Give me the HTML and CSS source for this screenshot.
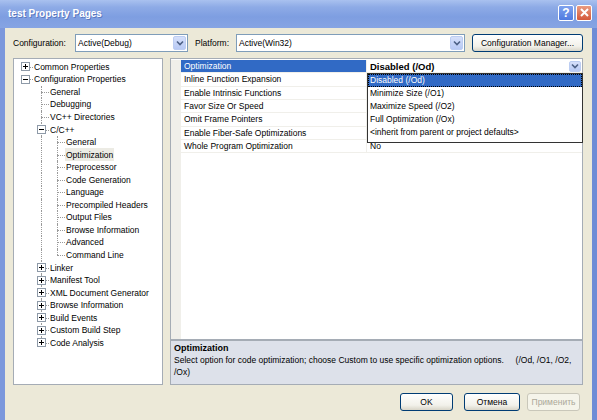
FILE: index.html
```html
<!DOCTYPE html>
<html>
<head>
<meta charset="utf-8">
<link rel="stylesheet" href="styles.css">
</head>
<body>
<div class="window">
  <div class="titlebar">
    <span class="title">test Property Pages</span>
    <div class="tbtns">
      <span class="tb help">?</span>
      <span class="tb close"><svg width="9" height="9" viewBox="0 0 9 9"><path d="M1 1L8 8M8 1L1 8" stroke="#fff" stroke-width="2"/></svg></span>
    </div>
  </div>
  <div class="frame">
    <div class="toprow">
      <span class="lab l1">Configuration:</span>
      <div class="combo c1"><span class="ctext">Active(Debug)</span><span class="ddb"><svg width="8" height="6" viewBox="0 0 8 6"><path d="M1 1.5L4 4.5L7 1.5" fill="none" stroke="#4d6185" stroke-width="1.6"/></svg></span></div>
      <span class="lab l2">Platform:</span>
      <div class="combo c2"><span class="ctext">Active(Win32)</span><span class="ddb"><svg width="8" height="6" viewBox="0 0 8 6"><path d="M1 1.5L4 4.5L7 1.5" fill="none" stroke="#4d6185" stroke-width="1.6"/></svg></span></div>
      <button class="btn cm">Configuration Manager...</button>
    </div>
    <div class="main">
      <div class="tree">
        <div class="tn"><span class="c h"><svg class="bx" width="9" height="9" viewBox="0 0 9 9"><rect x="0.5" y="0.5" width="8" height="8" fill="#fff" stroke="#8e9aa8"/><path d="M2 4.5h5M4.5 2v5" stroke="#000"/></svg></span><span class="lbl">Common Properties</span></div>
        <div class="tn"><span class="c h"><svg class="bx" width="9" height="9" viewBox="0 0 9 9"><rect x="0.5" y="0.5" width="8" height="8" fill="#fff" stroke="#8e9aa8"/><path d="M2 4.5h5" stroke="#000"/></svg></span><span class="lbl">Configuration Properties</span></div>
        <div class="tn"><span class="c"></span><span class="c t"></span><span class="lbl">General</span></div>
        <div class="tn"><span class="c"></span><span class="c t"></span><span class="lbl">Debugging</span></div>
        <div class="tn"><span class="c"></span><span class="c t"></span><span class="lbl">VC++ Directories</span></div>
        <div class="tn"><span class="c"></span><span class="c t"><svg class="bx" width="9" height="9" viewBox="0 0 9 9"><rect x="0.5" y="0.5" width="8" height="8" fill="#fff" stroke="#8e9aa8"/><path d="M2 4.5h5" stroke="#000"/></svg></span><span class="lbl">C/C++</span></div>
        <div class="tn"><span class="c"></span><span class="c v"></span><span class="c t"></span><span class="lbl">General</span></div>
        <div class="tn"><span class="c"></span><span class="c v"></span><span class="c t"></span><span class="lbl sel">Optimization</span></div>
        <div class="tn"><span class="c"></span><span class="c v"></span><span class="c t"></span><span class="lbl">Preprocessor</span></div>
        <div class="tn"><span class="c"></span><span class="c v"></span><span class="c t"></span><span class="lbl">Code Generation</span></div>
        <div class="tn"><span class="c"></span><span class="c v"></span><span class="c t"></span><span class="lbl">Language</span></div>
        <div class="tn"><span class="c"></span><span class="c v"></span><span class="c t"></span><span class="lbl">Precompiled Headers</span></div>
        <div class="tn"><span class="c"></span><span class="c v"></span><span class="c t"></span><span class="lbl">Output Files</span></div>
        <div class="tn"><span class="c"></span><span class="c v"></span><span class="c t"></span><span class="lbl">Browse Information</span></div>
        <div class="tn"><span class="c"></span><span class="c v"></span><span class="c t"></span><span class="lbl">Advanced</span></div>
        <div class="tn"><span class="c"></span><span class="c v"></span><span class="c e"></span><span class="lbl">Command Line</span></div>
        <div class="tn"><span class="c"></span><span class="c t"><svg class="bx" width="9" height="9" viewBox="0 0 9 9"><rect x="0.5" y="0.5" width="8" height="8" fill="#fff" stroke="#8e9aa8"/><path d="M2 4.5h5M4.5 2v5" stroke="#000"/></svg></span><span class="lbl">Linker</span></div>
        <div class="tn"><span class="c"></span><span class="c t"><svg class="bx" width="9" height="9" viewBox="0 0 9 9"><rect x="0.5" y="0.5" width="8" height="8" fill="#fff" stroke="#8e9aa8"/><path d="M2 4.5h5M4.5 2v5" stroke="#000"/></svg></span><span class="lbl">Manifest Tool</span></div>
        <div class="tn"><span class="c"></span><span class="c t"><svg class="bx" width="9" height="9" viewBox="0 0 9 9"><rect x="0.5" y="0.5" width="8" height="8" fill="#fff" stroke="#8e9aa8"/><path d="M2 4.5h5M4.5 2v5" stroke="#000"/></svg></span><span class="lbl">XML Document Generator</span></div>
        <div class="tn"><span class="c"></span><span class="c t"><svg class="bx" width="9" height="9" viewBox="0 0 9 9"><rect x="0.5" y="0.5" width="8" height="8" fill="#fff" stroke="#8e9aa8"/><path d="M2 4.5h5M4.5 2v5" stroke="#000"/></svg></span><span class="lbl">Browse Information</span></div>
        <div class="tn"><span class="c"></span><span class="c t"><svg class="bx" width="9" height="9" viewBox="0 0 9 9"><rect x="0.5" y="0.5" width="8" height="8" fill="#fff" stroke="#8e9aa8"/><path d="M2 4.5h5M4.5 2v5" stroke="#000"/></svg></span><span class="lbl">Build Events</span></div>
        <div class="tn"><span class="c"></span><span class="c t"><svg class="bx" width="9" height="9" viewBox="0 0 9 9"><rect x="0.5" y="0.5" width="8" height="8" fill="#fff" stroke="#8e9aa8"/><path d="M2 4.5h5M4.5 2v5" stroke="#000"/></svg></span><span class="lbl">Custom Build Step</span></div>
        <div class="tn"><span class="c"></span><span class="c e"><svg class="bx" width="9" height="9" viewBox="0 0 9 9"><rect x="0.5" y="0.5" width="8" height="8" fill="#fff" stroke="#8e9aa8"/><path d="M2 4.5h5M4.5 2v5" stroke="#000"/></svg></span><span class="lbl">Code Analysis</span></div>
      </div>
      <div class="right">
        <div class="grid">
          <div class="row"><span class="mg"></span><span class="nm hl">Optimization</span><span class="val"><b>Disabled (/Od)</b><span class="vdd"><svg width="8" height="6" viewBox="0 0 8 6"><path d="M1 1.5L4 4.5L7 1.5" fill="none" stroke="#4d6185" stroke-width="1.6"/></svg></span></span></div>
          <div class="row"><span class="mg"></span><span class="nm">Inline Function Expansion</span><span class="val"></span></div>
          <div class="row"><span class="mg"></span><span class="nm">Enable Intrinsic Functions</span><span class="val"></span></div>
          <div class="row"><span class="mg"></span><span class="nm">Favor Size Or Speed</span><span class="val"></span></div>
          <div class="row"><span class="mg"></span><span class="nm">Omit Frame Pointers</span><span class="val"></span></div>
          <div class="row"><span class="mg"></span><span class="nm">Enable Fiber-Safe Optimizations</span><span class="val"></span></div>
          <div class="row"><span class="mg"></span><span class="nm">Whole Program Optimization</span><span class="val">No</span></div>
          <div class="rest"><span class="mg"></span></div>
          <div class="dropdown">
            <div class="opt on">Disabled (/Od)</div>
            <div class="opt">Minimize Size (/O1)</div>
            <div class="opt">Maximize Speed (/O2)</div>
            <div class="opt">Full Optimization (/Ox)</div>
            <div class="opt">&lt;inherit from parent or project defaults&gt;</div>
          </div>
        </div>
        <div class="desc">
          <div class="dtitle">Optimization</div>
          <div class="dtext">Select option for code optimization; choose Custom to use specific optimization options.     (/Od, /O1, /O2, /Ox)</div>
        </div>
      </div>
    </div>
    <div class="bottom">
      <button class="btn ok">OK</button>
      <button class="btn cancel">Отмена</button>
      <button class="btn apply" disabled>Применить</button>
    </div>
  </div>
</div>
</body>
</html>
```
FILE: styles.css
```css
* { box-sizing: border-box; }
html, body { margin: 0; padding: 0; }
body {
  width: 597px; height: 420px; overflow: hidden;
  font-family: "Liberation Sans", Arial, sans-serif;
  font-size: 8.5px; color: #000;
  background: #ece9d8;
}
.window { width: 597px; height: 420px; display: flex; flex-direction: column; }
.titlebar {
  height: 28px; flex: none;
  background: linear-gradient(#a9c1ef 0%, #8eabe6 25%, #7e9ee1 60%, #86a4e3 100%);
  display: flex; align-items: center; justify-content: space-between;
  padding: 0 5px 0 8px;
}
.title { color: #fff; font-weight: bold; font-size: 10px; text-shadow: 1px 1px 0 #5a78c0; margin-top: -2px; }
.tbtns { display: flex; gap: 2px; margin-top: -3px; }
.tb {
  width: 16px; height: 16px; border: 1px solid #fff; border-radius: 2px;
  display: flex; align-items: center; justify-content: center;
  color: #fff; font-weight: bold; font-size: 12px;
}
.help { background: linear-gradient(#7fa2ee, #4f7ae0); }
.close { background: linear-gradient(#e99b80, #d4583a); }
.frame {
  flex: 1; display: flex; flex-direction: column;
  border-left: 5px solid #7c98dc; border-right: 5px solid #6f8cd6;
  padding: 6px 9px 0 8px;
}
.toprow { display: flex; align-items: center; height: 18px; }
.lab { flex: none; }
.l1 { width: 62px; }
.l2 { width: 41px; margin-left: 7px; }
.combo {
  height: 18px; border: 1px solid #7f9db9; background: #fff;
  display: flex; align-items: center; justify-content: space-between;
  padding: 0 1px 0 2px; flex: none;
}
.c1 { width: 113px; }
.c2 { width: 229px; }
.ddb {
  width: 13px; height: 14px; border-radius: 2px;
  background: linear-gradient(#d6e0fa, #b7c9f4);
  border: 1px solid #bccdf2;
  display: flex; align-items: center; justify-content: center;
}
.btn {
  font-family: inherit; font-size: 8.5px; color: #000;
  height: 18px; border: 1px solid #003c74; border-radius: 3px;
  background: linear-gradient(#ffffff, #f2f1ea 70%, #d8d5c8);
  padding: 0; flex: none;
}
.cm { width: 111px; margin-left: 7px; }
.main { display: flex; margin-top: 6px; height: 327px; gap: 7px; }
.tree {
  width: 150px; flex: none; background: #fff; border: 1px solid #a5acb5;
  padding: 1.5px 0 0 4px;
}
.tn { display: flex; height: 12.55px; align-items: stretch; }
.c { width: 16px; flex: none; position: relative; display: flex; align-items: center; justify-content: center; }
.c::before, .c::after { content: ""; position: absolute; }
.c.v::before, .c.t::before { left: 7px; top: 0; bottom: 0; border-left: 1px dotted #9a9a9a; }
.c.e::before { left: 7px; top: 0; height: 50%; border-left: 1px dotted #9a9a9a; }
.c.t::after, .c.e::after, .c.h::after { left: 7px; width: 8px; top: 50%; border-top: 1px dotted #9a9a9a; }
.bx { position: relative; z-index: 1; margin-right: 1px; }
.lbl { display: flex; align-items: center; padding: 0 1px; margin-left: -1px; white-space: nowrap; }
.lbl.sel { background: #ecebe4; }
.right { width: 413px; flex: none; display: flex; flex-direction: column; }
.grid {
  height: 282px; background: #fff; border: 1px solid #a5acb5;
  position: relative; display: flex; flex-direction: column; padding-top: 1px;
}
.row { display: flex; height: 13.33px; flex: none; }
.mg { width: 10px; flex: none; background: #f0efea; }
.nm { width: 186px; flex: none; padding-left: 3px; display: flex; align-items: center; border-bottom: 1px solid #f0efea; border-right: 1px solid #f0efea; }
.nm.hl { background: #316ac5; color: #fff; }
.val { flex: 1; display: flex; align-items: center; justify-content: space-between; padding-left: 3px; padding-right: 1px; border-bottom: 1px solid #f0efea; }
.val b { font-size: 9.5px; }
.vdd {
  width: 12px; height: 11px; border-radius: 2px;
  background: linear-gradient(#d6e0fa, #b7c9f4); border: 1px solid #bccdf2;
  display: flex; align-items: center; justify-content: center;
}
.rest { flex: 1; display: flex; }
.dropdown {
  position: absolute; left: 196px; top: 14px; width: 216px; height: 70px;
  background: #fff; border: 1px solid #333; padding: 0;
}
.opt { height: 13px; line-height: 13px; padding-left: 2px; white-space: nowrap; }
.opt.on { background: #316ac5; color: #fff; outline: 1px dotted #000; outline-offset: -1px; }
.desc {
  margin-top: 0; flex: 1; background: #dde1ea; border: 1px solid #a5acb5;
  padding: 1px 4px 0 3px; line-height: 12px;
}
.dtitle { font-weight: bold; font-size: 9px; }
.dtext { white-space: pre-wrap; }
.bottom { display: flex; justify-content: flex-end; margin-top: 8px; padding-right: 3px; }
.ok { width: 53px; }
.cancel { width: 56px; margin-left: 11px; }
.apply { width: 53px; margin-left: 7px; color: #aca899; border-color: #c9c7ba; background: #f5f4ea; }
```
